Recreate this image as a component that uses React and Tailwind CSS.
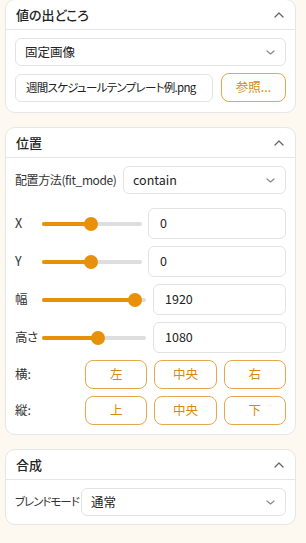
import React from "react";

function ChevUp() {
  return (
    <svg width="10" height="6" viewBox="0 0 10 6" fill="none">
      <polyline points="1,5 5,1 9,5" stroke="#666" strokeWidth="1.3" strokeLinecap="round" strokeLinejoin="round" />
    </svg>
  );
}
function ChevDown() {
  return (
    <svg width="9" height="5" viewBox="0 0 9 5" fill="none">
      <polyline points="1,1 4.5,4 8,1" stroke="#888" strokeWidth="1.2" strokeLinecap="round" strokeLinejoin="round" />
    </svg>
  );
}

function Card({ title, children, className = "" }) {
  return (
    <div className={"border border-[#e6e6e6] rounded-[10px] bg-white " + className}>
      <div className="h-[30px] flex items-center justify-between pl-[10px] pr-[11px] border-b border-[#e6e6e6]">
        <span className="text-[13px] font-medium text-[#222]">{title}</span>
        <ChevUp />
      </div>
      {children}
    </div>
  );
}

function Select({ value, className = "" }) {
  return (
    <div className={"h-[28px] border border-[#e3e3e3] rounded-[6px] flex items-center justify-between pl-[9px] pr-[10px] text-[12.5px] text-[#222] " + className}>
      <span>{value}</span>
      <ChevDown />
    </div>
  );
}

function Slider({ pct, w }) {
  return (
    <div className="relative h-[14px] flex items-center" style={{ width: w }}>
      <div className="w-full h-[4px] rounded-full bg-[#dedede]" />
      <div className="absolute left-0 h-[4px] rounded-full bg-[#e8900a]" style={{ width: `${pct}%` }} />
      <div className="absolute w-[14px] h-[14px] rounded-full bg-[#e8900a]" style={{ left: `calc(${pct}% - 7px)` }} />
    </div>
  );
}

function SliderRow({ label, pct, sw, value, gap }) {
  return (
    <div className="flex items-center">
      <span className="w-[27px] text-[12.5px] text-[#333] whitespace-nowrap tracking-[-0.5px]">{label}</span>
      <Slider pct={pct} w={sw} />
      <div className="flex-1 h-[31px] border border-[#e3e3e3] rounded-[6px] flex items-center pl-[11px] text-[12.5px] text-[#222]" style={{ marginLeft: gap }}>
        {value}
      </div>
    </div>
  );
}

function Btn({ children }) {
  return (
    <div className="flex-1 h-[29px] border border-[#e6a84c] rounded-[8px] flex items-center justify-center text-[12.5px] text-[#d88a10]">
      {children}
    </div>
  );
}

export default function App() {
  return (
    <div className="font-['Noto_Sans_CJK_JP','Noto_Sans',sans-serif] [font-feature-settings:'palt'] bg-[#fdf9f1] h-[543px] overflow-hidden pl-[5px] pr-[10px] flex flex-col gap-[14px]">
      <Card title="値の出どころ" className="-mt-px">
        <div className="px-[9px] pt-[8px] pb-[10px] flex flex-col gap-[7px]">
          <Select value="固定画像" />
          <div className="flex items-center gap-[8px]">
            <div className="w-[198px] h-[28px] border border-[#e3e3e3] rounded-[6px] flex items-center pl-[10px] text-[11.5px] tracking-[-0.7px] text-[#222] whitespace-nowrap overflow-hidden">
              週間スケジュールテンプレート例.png
            </div>
            <div className="flex-1 h-[29px] border border-[#e6a84c] rounded-[8px] flex items-center justify-center text-[12.5px] text-[#d88a10]">
              参照...
            </div>
          </div>
        </div>
      </Card>

      <Card title="位置">
        <div className="px-[9px] pt-[8px] pb-[9px] flex flex-col">
          <div className="flex items-center gap-[7px]">
            <span className="text-[12px] tracking-[-0.4px] text-[#333] whitespace-nowrap w-[101px]">配置方法(fit_mode)</span>
            <Select value="contain" className="flex-1" />
          </div>
          <div className="flex flex-col gap-[7px] mt-[14px]">
            <SliderRow label="X" pct={49} sw={100} value="0" gap={6} />
            <SliderRow label="Y" pct={49} sw={100} value="0" gap={6} />
            <SliderRow label="幅" pct={89} sw={104} value="1920" gap={7} />
            <SliderRow label="高さ" pct={54} sw={104} value="1080" gap={7} />
            <div className="flex items-center">
              <span className="w-[70px] text-[12.5px] text-[#333]">横:</span>
              <div className="flex-1 flex gap-[7px]">
                <Btn>左</Btn>
                <Btn>中央</Btn>
                <Btn>右</Btn>
              </div>
            </div>
            <div className="flex items-center">
              <span className="w-[70px] text-[12.5px] text-[#333]">縦:</span>
              <div className="flex-1 flex gap-[7px]">
                <Btn>上</Btn>
                <Btn>中央</Btn>
                <Btn>下</Btn>
              </div>
            </div>
          </div>
        </div>
      </Card>

      <Card title="合成">
        <div className="px-[9px] pt-[8px] pb-[8px] flex items-center gap-[6px]">
          <span className="text-[11.5px] text-[#333] whitespace-nowrap w-[60px] tracking-[-1px]">ブレンドモード</span>
          <Select value="通常" className="flex-1" />
        </div>
      </Card>
    </div>
  );
}
